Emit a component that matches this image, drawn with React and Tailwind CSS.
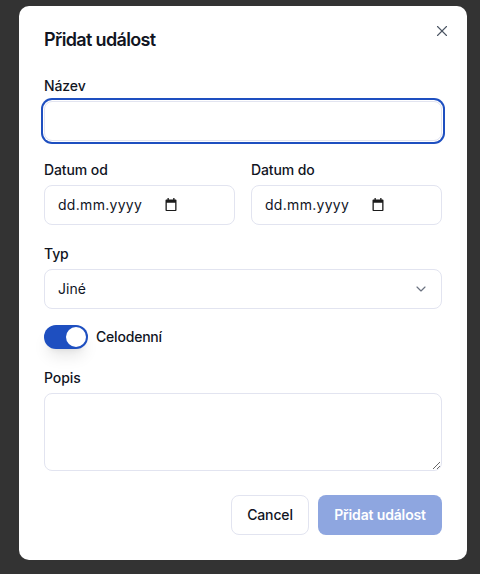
import React from 'react';
import { X, ChevronDown } from 'lucide-react';

const fieldBox = 'h-10 w-full rounded-lg border border-[#e2e4f0] bg-white px-[13px] text-sm text-[#11151f] outline-none';

const Label = ({ children }) => (
  <label className="mb-[5px] block text-sm font-medium leading-5 tracking-[-0.1px] text-[#11151f]">{children}</label>
);

const CalendarIcon = () => (
  <svg width="16" height="16" viewBox="0 0 16 16" className="text-[#1b1b1b]">
    <path
      fill="currentColor"
      fillRule="evenodd"
      d="M4.500 1h1.300v1.500h4.400V1h1.300v1.500h1.200c.4 0 .8.400.8.800v9.900c0 .4-.4.800-.8.800H3.300c-.4 0-.8-.4-.8-.8V3.300c0-.4.400-.8.800-.8h1.200V1zM3.800 5.800v7.100h8.400V5.800H3.800z"
    />
  </svg>
);

const DateField = ({ label }) => (
  <div className="flex-1">
    <Label>{label}</Label>
    <div className={`${fieldBox} flex items-center justify-between pr-[55px]`}>
      <span className="tracking-[0.3px]">dd.mm.yyyy</span>
      <CalendarIcon />
    </div>
  </div>
);

export default function App() {
  return (
    <div className="flex h-[574px] justify-center overflow-hidden bg-[#333333] pl-[6px] pt-[6px] font-['Inter',sans-serif] antialiased">
      <div className="relative h-[554px] w-[448px] rounded-[10px] bg-white px-[25px] pt-[22px]">
        <button className="absolute right-[16px] top-[16px] text-[#4b5563]">
          <X size={18} strokeWidth={1.5} />
        </button>

        <h2 className="text-lg font-semibold leading-6 tracking-[-0.65px] text-[#11151f]">Přidat událost</h2>

        <div className="mt-[24px]">
          <Label>Název</Label>
          <input className={`${fieldBox} ring-2 ring-[#1e4fc0] ring-offset-1`} />
        </div>

        <div className="mt-[19px] flex gap-4">
          <DateField label="Datum od" />
          <DateField label="Datum do" />
        </div>

        <div className="mt-[19px]">
          <Label>Typ</Label>
          <button className={`${fieldBox} flex items-center justify-between pr-[12px] text-left`}>
            <span>Jiné</span>
            <ChevronDown size={16} strokeWidth={1.75} className="text-[#6b7280]" />
          </button>
        </div>

        <div className="mt-4 flex items-center gap-2">
          <span className="flex h-6 w-11 items-center justify-end rounded-full bg-[#1e4fc0] px-[2px] shadow-lg">
            <span className="size-5 rounded-full bg-white" />
          </span>
          <span className="text-sm font-medium tracking-[-0.2px] text-[#11151f]">Celodenní</span>
        </div>

        <div className="mt-[19px]">
          <Label>Popis</Label>
          <textarea className="block h-[78px] w-full rounded-lg border border-[#e2e4f0] bg-white px-[13px] py-2 text-sm outline-none" />
        </div>

        <div className="mt-6 flex justify-end gap-[9px]">
          <button className="h-10 w-[78px] rounded-lg border border-[#e2e4f0] bg-white text-sm font-medium tracking-[-0.15px] text-[#11151f]">
            Cancel
          </button>
          <button className="h-10 w-[124px] rounded-lg bg-[#8ea6e0] text-sm font-semibold tracking-[-0.15px] text-white">
            Přidat událost
          </button>
        </div>
      </div>
    </div>
  );
}
